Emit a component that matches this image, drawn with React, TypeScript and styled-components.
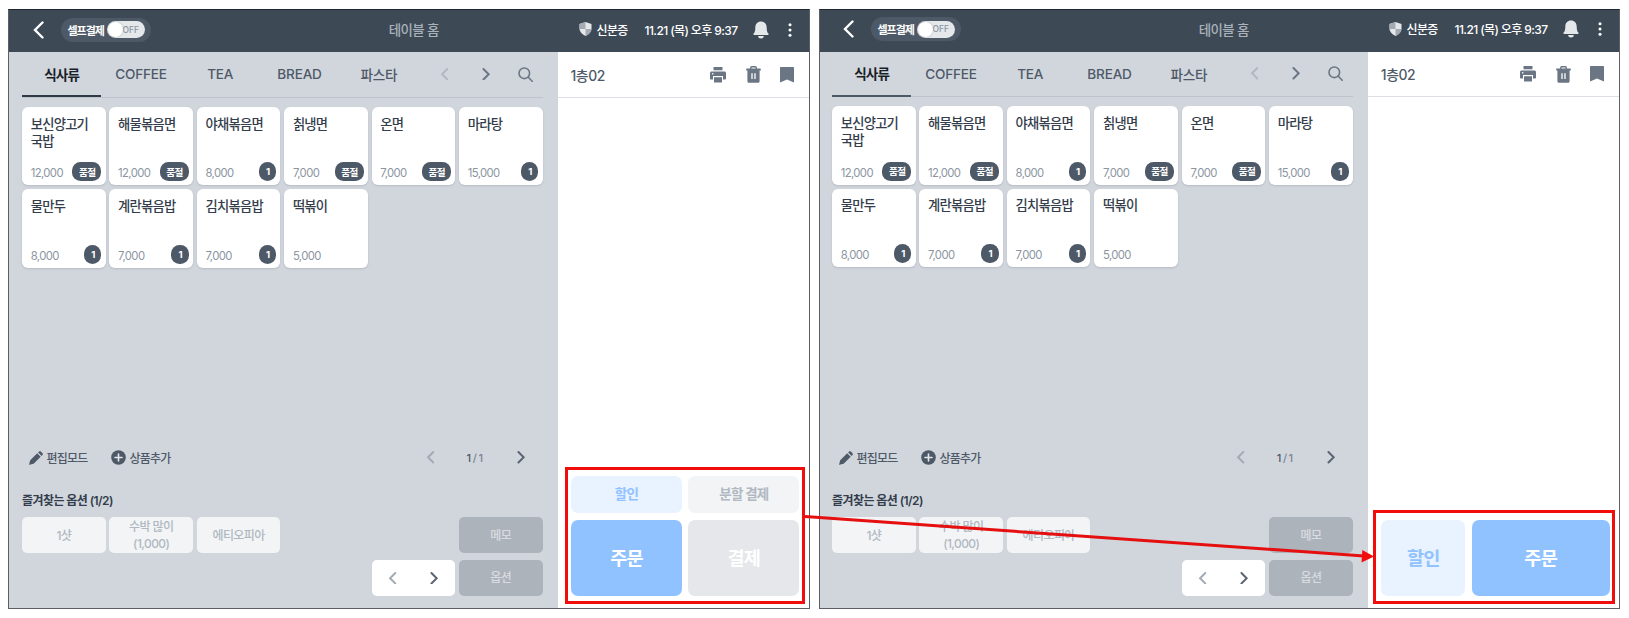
import React from 'react'
import styled, { createGlobalStyle, css } from 'styled-components'

const GlobalStyle = createGlobalStyle`
  * {
    box-sizing: border-box;
  }

  body {
    margin: 0;
    background: #fff;
    font-family: Inter, 'Noto Sans CJK KR', sans-serif;
    color: #333d4b;
  }

  svg {
    display: block;
    flex-shrink: 0;
  }
`

const Page = styled.div`
  position: relative;
  display: flex;
  gap: 9px;
  width: 1629px;
  height: 618px;
  padding: 9px 8px;
  overflow: hidden;
`

const Screen = styled.section<{ $width: number }>`
  display: flex;
  flex-direction: column;
  flex-shrink: 0;
  width: ${({ $width }) => $width}px;
  height: 600px;
  border: 1px solid #5c6066;
  border-top-color: #20282f;
`

const TopBar = styled.header<{ $compact: boolean }>`
  display: grid;
  grid-template-columns: 1fr auto 1fr;
  align-items: center;
  flex-shrink: 0;
  height: ${({ $compact }) => ($compact ? 41.8 : 42.4)}px;
  padding: 0 17.5px ${({ $compact }) => ($compact ? '3px 21px' : '2.6px 22px')};
  background: #3d4a56;
  color: #fff;
`

const TopLeft = styled.div`
  display: flex;
  align-items: center;
  gap: 16px;
  padding-left: 1px;
`

const SelfPay = styled.div`
  display: flex;
  align-items: center;
  justify-content: space-between;
  width: 90px;
  height: 24px;
  padding: 0 6px 0 7px;
  border-radius: 12px;
  background: #4e5968;
  font-size: 11px;
  font-weight: 700;
  letter-spacing: -1.1px;
  white-space: nowrap;
`

const Toggle = styled.span`
  display: flex;
  align-items: center;
  width: 38px;
  height: 17px;
  padding: 1px 0 1px 1px;
  border-radius: 9px;
  background: #e5e8eb;
  color: #8b95a1;
  font-size: 8.5px;
  font-weight: 500;
  letter-spacing: -0.1px;
`

const Knob = styled.i`
  width: 15px;
  height: 15px;
  border-radius: 50%;
  background: #fff;
  box-shadow: 0 0 2px rgba(0, 0, 0, 0.25);
`

const ScreenTitle = styled.div`
  padding: 0 0 1.5px 5px;
  color: #a9b1ba;
  font-size: 13.5px;
  font-weight: 500;
  letter-spacing: -0.7px;
`

const TopRight = styled.div`
  display: flex;
  align-items: center;
  justify-content: flex-end;
  font-size: 12px;
  font-weight: 500;
  letter-spacing: -0.7px;
  white-space: nowrap;
`

const IdCheck = styled.span`
  display: flex;
  align-items: center;
  gap: 5px;
  margin-right: 17px;
  padding-bottom: 1.5px;
`

const Clock = styled.span`
  margin-right: 15px;
  padding-bottom: 1.5px;
  letter-spacing: -0.6px;
`

const MoreButton = styled.span`
  margin-left: 19px;
`

const Body = styled.div`
  display: flex;
  flex: 1;
  min-height: 0;
`

const Menu = styled.main<{ $compact: boolean }>`
  display: flex;
  flex-direction: column;
  flex-shrink: 0;
  width: ${({ $compact }) => ($compact ? 548.3 : 549)}px;
  padding: ${({ $compact }) => ($compact ? '0 15.5px 12px 12px' : '0 15.4px 12px 13px')};
  background: #d1d6dd;
`

const Tabs = styled.nav`
  display: flex;
  flex-shrink: 0;
  height: 45.4px;
  border-bottom: 1px solid #bec4cb;
`

const Tab = styled.div<{ $active: boolean; $line: string }>`
  display: flex;
  align-items: center;
  justify-content: center;
  flex-shrink: 0;
  width: 79.3px;
  height: 45px;
  padding-top: 1px;
  border-bottom: 2px solid transparent;
  color: #4e5968;
  font-size: 13.6px;
  font-weight: 500;
  letter-spacing: -0.2px;
  ${({ $active, $line }) =>
    $active &&
    css`
      padding-top: 0;
      border-bottom-color: ${$line};
      color: #191f28;
      font-weight: 700;
      letter-spacing: -0.9px;
    `}
`

const TabIcons = styled.div`
  display: grid;
  grid-template-columns: 43px 42px 36px;
  place-items: center;
  flex-shrink: 0;
  margin-left: 4px;
  padding-bottom: 1px;
`

const Cards = styled.div`
  display: grid;
  grid-template-columns: repeat(6, 1fr);
  grid-auto-rows: 78.4px;
  gap: 3.8px;
  flex: 1;
  margin-top: 9.3px;
`

const Card = styled.div`
  display: flex;
  flex-direction: column;
  justify-content: space-between;
  padding: 8.5px 4.2px 4px 8.7px;
  border-radius: 6px;
  background: #fff;
  box-shadow: 0 1px 2px rgba(60, 70, 90, 0.18);
`

const CardName = styled.div`
  font-size: 13.3px;
  font-weight: 500;
  line-height: 17.3px;
  letter-spacing: -0.75px;
  white-space: pre-line;
`

const CardFoot = styled.div`
  display: flex;
  align-items: flex-end;
  justify-content: space-between;
  height: 19px;
`

const Price = styled.span`
  color: #8b95a1;
  font-size: 11.3px;
  line-height: 16px;
  letter-spacing: -0.6px;
`

const Badge = styled.span`
  display: flex;
  align-items: center;
  justify-content: center;
  min-width: 17.5px;
  height: 19px;
  padding: 0 6px 0 6.5px;
  border-radius: 8.5px;
  background: #4e5968;
  color: #fff;
  font-size: 9.6px;
  font-weight: 700;
  letter-spacing: -0.6px;
`

const ToolRow = styled.div`
  display: flex;
  align-items: center;
  height: 20px;
  margin-bottom: 23px;
  padding-left: 7px;
  color: #4e5968;
  font-size: 12px;
  font-weight: 500;
  letter-spacing: -0.8px;
`

const Tool = styled.span`
  display: flex;
  align-items: center;
  gap: 3.5px;
  margin-right: 23.5px;
`

const Pager = styled.span`
  display: grid;
  grid-template-columns: 45px 46px 45px;
  place-items: center;
  margin-left: auto;
  margin-right: -1px;
  color: #7b8591;
  font-size: 11px;
  letter-spacing: 1.6px;
`

const CurrentPage = styled.b`
  color: #4e5968;
  font-weight: 500;
`

const OptionTitle = styled.div`
  height: 20px;
  margin-bottom: 6.5px;
  font-size: 12px;
  font-weight: 600;
  line-height: 20px;
  letter-spacing: -0.58px;
`

const Options = styled.div`
  display: grid;
  grid-template-columns: repeat(6, 1fr);
  grid-template-rows: 36.2px 36.2px;
  gap: 6.6px 3.8px;
`

const Option = styled.div<{ $dark?: boolean }>`
  display: flex;
  align-items: center;
  justify-content: center;
  border-radius: 5px;
  background: ${({ $dark }) => ($dark ? '#adb3bb' : '#f2f4f6')};
  color: ${({ $dark }) => ($dark ? '#d8dce1' : '#b0b8c1')};
  font-size: 12px;
  font-weight: 500;
  line-height: 17px;
  letter-spacing: -0.6px;
  text-align: center;
  white-space: pre-line;
  ${({ $dark }) => $dark && 'grid-column: 6;'}
`

const OptionPager = styled.div`
  grid-area: 2 / 5;
  display: grid;
  grid-template-columns: 1fr 1fr;
  place-items: center;
  border-radius: 5px;
  background: #fff;
`

const Order = styled.aside`
  display: flex;
  flex-direction: column;
  flex: 1;
  background: #fff;
`

const OrderHead = styled.div`
  display: flex;
  align-items: center;
  flex-shrink: 0;
  height: 45.2px;
  padding: 1px 14.6px 0 12.5px;
  border-bottom: 1px solid #dcdfe3;
  color: #4e5968;
  font-size: 13.9px;
  font-weight: 500;
  letter-spacing: -0.4px;
`

const OrderIcons = styled.div`
  display: flex;
  align-items: center;
  gap: 19.6px;
  margin-left: auto;
`

const Actions = styled.div<{ $compact: boolean }>`
  position: relative;
  display: grid;
  grid-template: ${({ $compact }) => ($compact ? '76.3px / 84px 1fr' : '37.5px 76.3px / 1fr 1fr')};
  gap: 6.5px;
  margin: auto ${({ $compact }) => ($compact ? 9.5 : 9.7)}px 12px 13px;
`

const tones = {
  light: '#e8f3ff',
  grey: '#f2f4f6',
  blue: '#90c2ff',
  disabled: '#e5e7ea',
}

const labels = {
  light: '#90c2ff',
  grey: '#b0b8c1',
  blue: '#fff',
  disabled: '#fff',
}

const Action = styled.button<{ $tone: keyof typeof tones; $large?: boolean }>`
  padding: 0 0 2px;
  border: 0;
  border-radius: 7px;
  background: ${({ $tone }) => tones[$tone]};
  color: ${({ $tone }) => labels[$tone]};
  font-family: inherit;
  font-size: ${({ $large }) => ($large ? 18.6 : 13.5)}px;
  font-weight: ${({ $large }) => ($large ? 700 : 600)};
  letter-spacing: -0.8px;
`

const Highlight = styled.div<{ $compact: boolean }>`
  position: absolute;
  inset: ${({ $compact }) => ($compact ? '-10px -5.5px -8px -8px' : '-9px -6px -8px -6.5px')};
  border: 3px solid #f20d0d;
  pointer-events: none;
`

const Arrow = styled.svg`
  position: absolute;
  top: 0;
  left: 0;
  pointer-events: none;
`

interface ChevronProps {
  left?: boolean
  size?: number
  color: string
  weight?: number
}

function Chevron({ left, size = 12.5, color, weight = 1.9 }: ChevronProps) {
  return (
    <svg width={size * 0.7} height={size} viewBox="0 0 8.4 12" fill="none">
      <path d={left ? 'M7 1 2 6l5 5' : 'M1.4 1l5 5-5 5'} stroke={color} strokeWidth={weight} strokeLinecap="round" />
    </svg>
  )
}

function ShieldIcon() {
  return (
    <svg width="13" height="14" viewBox="0 0 13 14">
      <path d="M6.5 0l6 2v4.6c0 3.2-2.3 5.9-6 7.4-3.7-1.5-6-4.2-6-7.4V2z" fill="#e5e8eb" />
      <path d="M6.5 0v7H.5V2zM6.5 7h6c-.2 3-2.4 5.6-6 7z" fill="#a4abb3" />
    </svg>
  )
}

function BellIcon() {
  return (
    <svg width="16" height="18" viewBox="0 0 16 18" fill="#e5e8eb">
      <path d="M8 .5c3.4 0 5.7 2.5 5.7 5.9 0 3.3.5 4.9 1.7 6.2.5.6.2 1.4-.6 1.400H1.200c-.8 0-1.100-.8-.6-1.400 1.200-1.300 1.700-2.900 1.700-6.200C2.300 3 4.600.5 8 .5z" />
      <path d="M5.2 15h5.600a2.800 2.500 0 0 1-5.600 0z" />
    </svg>
  )
}

function MoreIcon() {
  return (
    <svg width="4" height="14" viewBox="0 0 4 14" fill="#fff">
      <circle cx="2" cy="1.7" r="1.5" />
      <circle cx="2" cy="7" r="1.5" />
      <circle cx="2" cy="12.3" r="1.5" />
    </svg>
  )
}

function SearchIcon() {
  return (
    <svg width="15" height="15" viewBox="0 0 15 15" fill="none" stroke="#6b7684" strokeWidth="1.6" strokeLinecap="round">
      <circle cx="6.3" cy="6.3" r="5.3" />
      <path d="m10.3 10.3 3.900 3.900" />
    </svg>
  )
}

function PrinterIcon() {
  return (
    <svg width="16" height="16" viewBox="0 0 16 16" fill="#6b7684">
      <path d="M3.500 0h9v3.300h-9z" />
      <path d="M1.500 4.500h13c.8 0 1.500.7 1.500 1.500v5.500c0 .6-.4 1-1 1h-2V9H3v3.500H1c-.6 0-1-.4-1-1V6c0-.8.7-1.500 1.500-1.500z" />
      <path d="M4 10.200h8v5.300H4z" />
      <circle cx="2.700" cy="6.700" r=".8" fill="#fff" />
    </svg>
  )
}

function TrashIcon() {
  return (
    <svg width="15" height="17" viewBox="0 0 15 17">
      <path d="M4.800 3V1.600c0-.5.300-.8.800-.8h3.800c.5 0 .8.300.8.800V3" fill="none" stroke="#6b7684" strokeWidth="1.4" />
      <path d="M.7 2.600h13.600c.3 0 .5.200.5.500v1.300H.2V3.100c0-.3.200-.5.500-.5z" fill="#6b7684" />
      <path d="M1.400 4h12.200v11.200c0 .9-.6 1.500-1.500 1.500H2.900c-.9 0-1.500-.6-1.500-1.500z" fill="#6b7684" />
      <path d="M6 7.300v5.800M9 7.300v5.800" stroke="#fff" strokeWidth="1.3" />
    </svg>
  )
}

function BookmarkIcon() {
  return (
    <svg width="14" height="16" viewBox="0 0 14 16" fill="#6b7684">
      <path d="M1 0h12c.6 0 1 .4 1 1v14.600l-7-3.200-7 3.200V1c0-.6.400-1 1-1z" />
    </svg>
  )
}

function PencilIcon() {
  return (
    <svg width="14" height="14" viewBox="0 0 14 14" fill="#4e5968">
      <path d="M8.200 2.300 11.700 5.800 4.600 12.700.5 13.800c-.3.100-.5-.1-.4-.4l1.100-4.200z" />
      <path d="M9.100 1.400 10.100.5c.5-.5 1.200-.5 1.700 0l1.700 1.700c.5.500.5 1.200 0 1.700l-.9 1z" />
    </svg>
  )
}

function PlusCircleIcon() {
  return (
    <svg width="15" height="15" viewBox="0 0 15 15">
      <circle cx="7.5" cy="7.5" r="7.3" fill="#4e5968" />
      <path d="M7.5 4v7M4 7.5h7" stroke="#e5e8eb" strokeWidth="1.6" strokeLinecap="round" />
    </svg>
  )
}

const TABS = ['식사류', 'COFFEE', 'TEA', 'BREAD', '파스타']

const PRODUCTS = [
  { name: '보신양고기\n국밥', price: '12,000', badge: '품절' },
  { name: '해물볶음면', price: '12,000', badge: '품절' },
  { name: '야채볶음면', price: '8,000', badge: '1' },
  { name: '칡냉면', price: '7,000', badge: '품절' },
  { name: '온면', price: '7,000', badge: '품절' },
  { name: '마라탕', price: '15,000', badge: '1' },
  { name: '물만두', price: '8,000', badge: '1' },
  { name: '계란볶음밥', price: '7,000', badge: '1' },
  { name: '김치볶음밥', price: '7,000', badge: '1' },
  { name: '떡볶이', price: '5,000' },
]

const OPTIONS = ['1샷', '수박 많이\n(1,000)', '에티오피아']

function PosScreen({ compact = false }: { compact?: boolean }) {
  return (
    <Screen $width={compact ? 801 : 802}>
      <TopBar $compact={compact}>
        <TopLeft>
          <Chevron left size={18} color="#fff" weight={1.6} />
          <SelfPay>
            셀프결제
            <Toggle>
              <Knob />
              OFF
            </Toggle>
          </SelfPay>
        </TopLeft>
        <ScreenTitle>테이블 홈</ScreenTitle>
        <TopRight>
          <IdCheck>
            <ShieldIcon />
            신분증
          </IdCheck>
          <Clock>11.21 (목) 오후 9:37</Clock>
          <BellIcon />
          <MoreButton>
            <MoreIcon />
          </MoreButton>
        </TopRight>
      </TopBar>
      <Body>
        <Menu $compact={compact}>
          <Tabs>
            {TABS.map((tab, i) => (
              <Tab key={tab} $active={i === 0} $line={compact ? '#4e5968' : '#2f3947'}>
                {tab}
              </Tab>
            ))}
            <TabIcons>
              <Chevron left color="#b0b8c1" />
              <Chevron color="#6b7684" />
              <SearchIcon />
            </TabIcons>
          </Tabs>
          <Cards>
            {PRODUCTS.map(({ name, price, badge }) => (
              <Card key={name}>
                <CardName>{name}</CardName>
                <CardFoot>
                  <Price>{price}</Price>
                  {badge && <Badge>{badge}</Badge>}
                </CardFoot>
              </Card>
            ))}
          </Cards>
          <ToolRow>
            <Tool>
              <PencilIcon />
              편집모드
            </Tool>
            <Tool>
              <PlusCircleIcon />
              상품추가
            </Tool>
            <Pager>
              <Chevron left color="#a3abb5" />
              <span>
                <CurrentPage>1</CurrentPage>/1
              </span>
              <Chevron color="#5a6472" />
            </Pager>
          </ToolRow>
          <OptionTitle>즐겨찾는 옵션 (1/2)</OptionTitle>
          <Options>
            {OPTIONS.map((option) => (
              <Option key={option}>{option}</Option>
            ))}
            <Option $dark>메모</Option>
            <OptionPager>
              <Chevron left color="#a3abb5" />
              <Chevron color="#5a6472" />
            </OptionPager>
            <Option $dark>옵션</Option>
          </Options>
        </Menu>
        <Order>
          <OrderHead>
            1층02
            <OrderIcons>
              <PrinterIcon />
              <TrashIcon />
              <BookmarkIcon />
            </OrderIcons>
          </OrderHead>
          <Actions $compact={compact}>
            {compact ? (
              <>
                <Action $tone="light" $large>
                  할인
                </Action>
                <Action $tone="blue" $large>
                  주문
                </Action>
              </>
            ) : (
              <>
                <Action $tone="light">할인</Action>
                <Action $tone="grey">분할 결제</Action>
                <Action $tone="blue" $large>
                  주문
                </Action>
                <Action $tone="disabled" $large>
                  결제
                </Action>
              </>
            )}
            <Highlight $compact={compact} />
          </Actions>
        </Order>
      </Body>
    </Screen>
  )
}

export default function App() {
  return (
    <>
      <GlobalStyle />
      <Page>
        <PosScreen />
        <PosScreen compact />
        <Arrow width="1629" height="618" viewBox="0 0 1629 618">
          <path d="M805 516.500 1364 556" stroke="#e60f0f" strokeWidth="3" />
          <path d="M1374 556.500 1361.500 562.500 1362.300 550z" fill="#f20d0d" />
        </Arrow>
      </Page>
    </>
  )
}
